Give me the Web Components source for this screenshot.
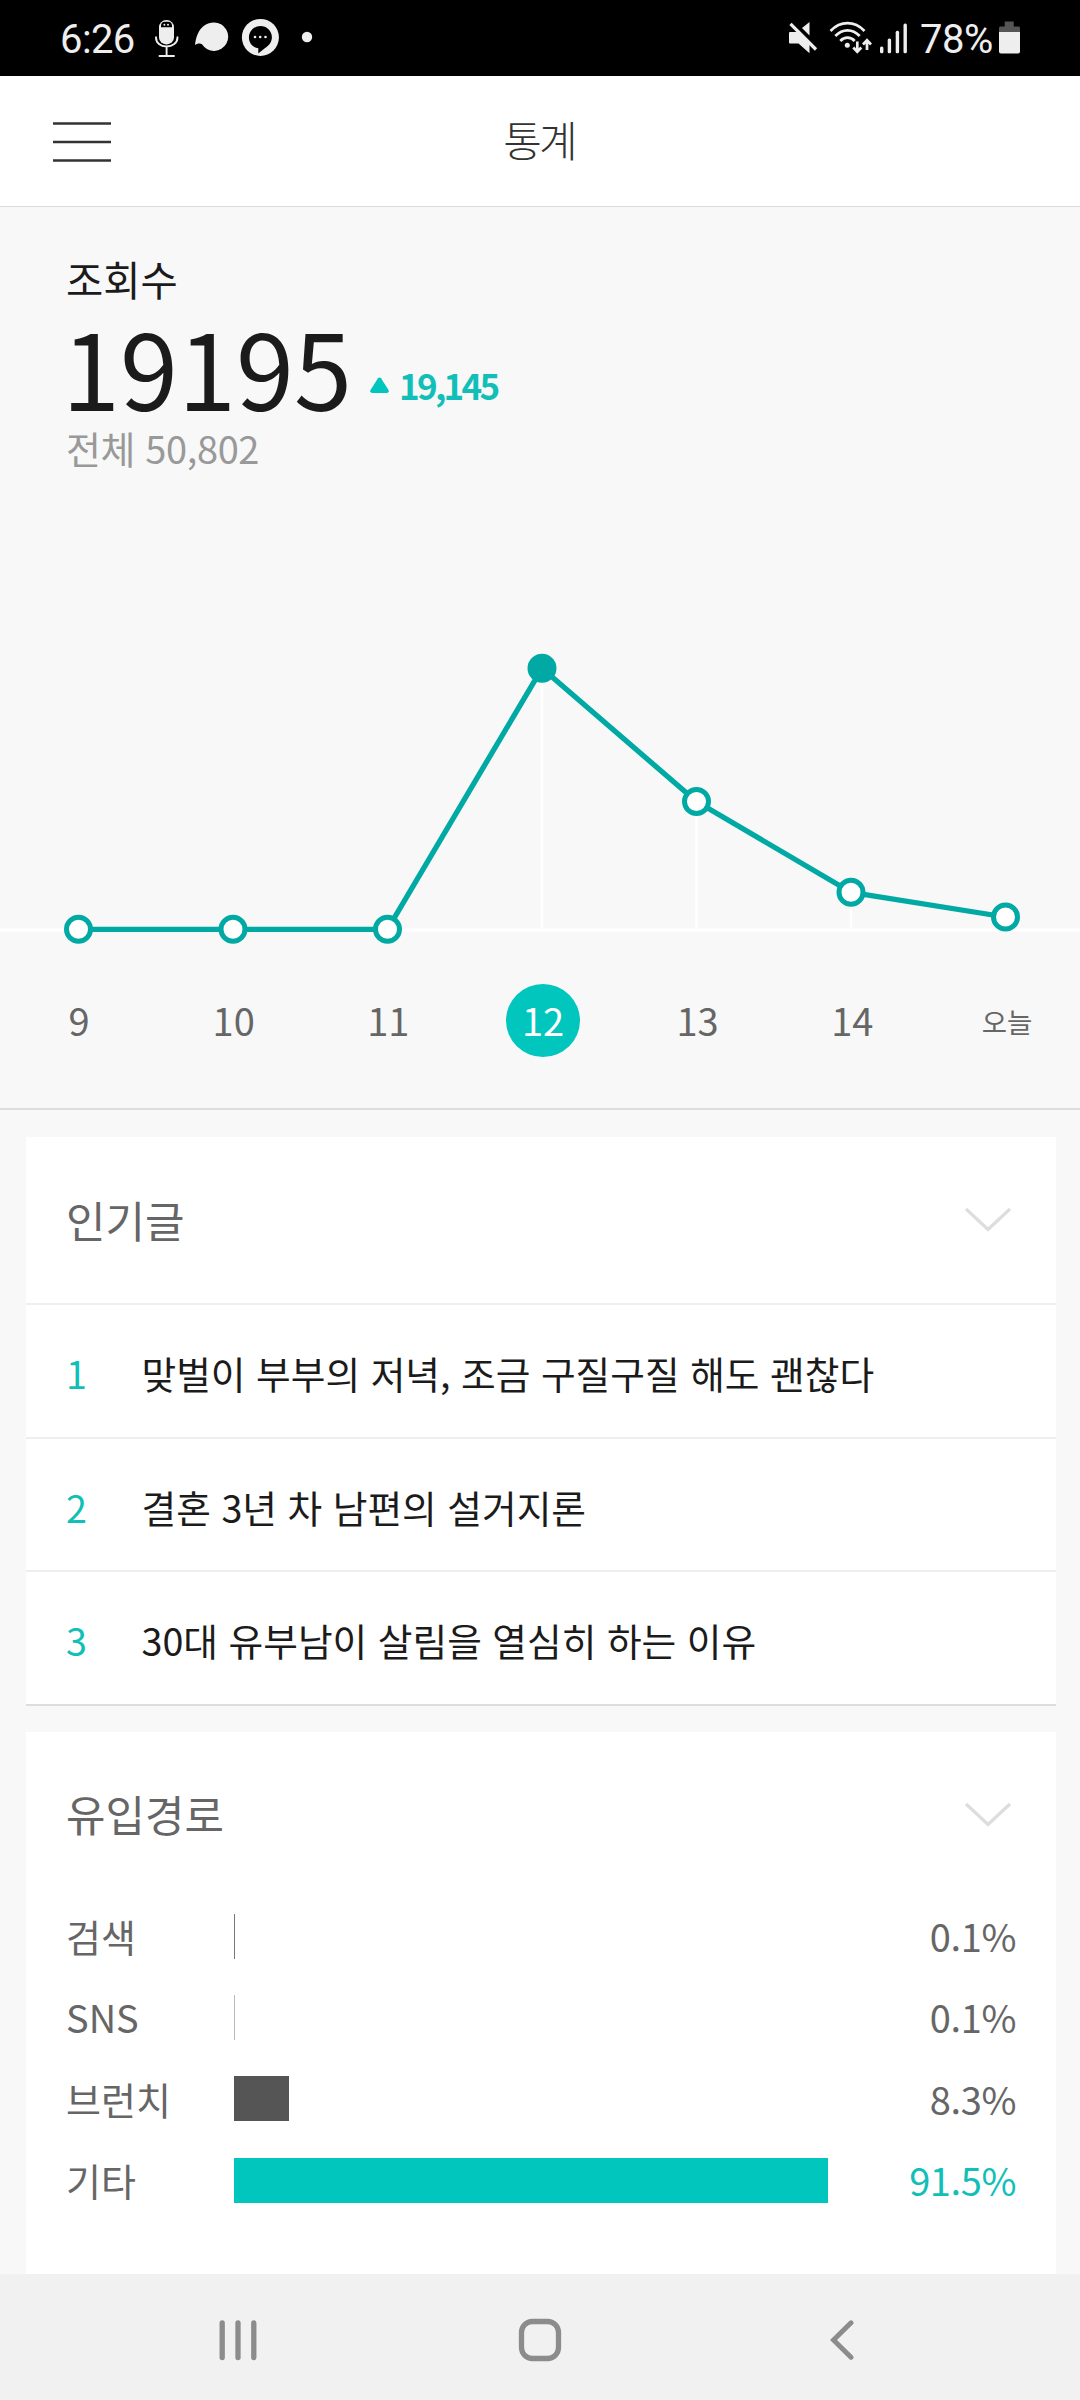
<!DOCTYPE html>
<html lang="ko">
<head>
<meta charset="utf-8">
<title>통계</title>
<style>
body{
  margin: 0;
  width: 1080px;
  height: 2400px;
  overflow: hidden;
  display: flex;
  flex-direction: column;
  background: #f8f8f8;
  color: #1b1b1b;
  font-family: 'Noto Sans CJK KR', sans-serif;
  --mint: #00c6be;
  --mint-text: #12bfb8;
  --gray: #666666;
}
main{
  flex: 1;
  min-height: 0;
  overflow: hidden;
  display: flex;
  flex-direction: column;
}
.cards{
  display: flex;
  flex-direction: column;
  gap: 26px;
  padding: 27px 24px 0 26px;
}
</style>
</head>
<body>
<status-bar time="6:26" battery="78%"></status-bar>
<app-header>통계</app-header>
<main>
  <view-summary count="19195" diff="19,145" total="전체 50,802">조회수</view-summary>
  <trend-chart></trend-chart>
  <day-picker days="9,10,11,12,13,14,오늘" selected="12"></day-picker>
  <div class="cards">
    <stat-card heading="인기글" class="posts">
      <ranked-post rank="1">맞벌이 부부의 저녁, 조금 구질구질 해도 괜찮다</ranked-post>
      <ranked-post rank="2">결혼 3년 차 남편의 설거지론</ranked-post>
      <ranked-post rank="3">30대 유부남이 살림을 열심히 하는 이유</ranked-post>
    </stat-card>
    <stat-card heading="유입경로" class="sources">
      <source-row value="0.1%" width="1" color="#777777">검색</source-row>
      <source-row value="0.1%" width="1" color="#bbbbbb">SNS</source-row>
      <source-row value="8.3%" width="55" color="#555555">브런치</source-row>
      <source-row value="91.5%" width="594" color="#00c6be" top>기타</source-row>
    </stat-card>
  </div>
</main>
<nav-bar></nav-bar>

<script>
class BaseElement extends HTMLElement {
  constructor() {
    super();
    this.attachShadow({ mode: 'open' });
  }
  connectedCallback() {
    this.shadowRoot.innerHTML = this.render();
  }
}

class StatusBar extends BaseElement {
  render() {
    return `
<style>
:host{
  display: flex;
  justify-content: space-between;
  align-items: flex-start;
  height: 76px;
  flex: none;
  box-sizing: border-box;
  padding: 16px 60px 0 60px;
  background: #000;
  color: #eee;
  font: 40px/47px Roboto, sans-serif;
}
.side{
  display: flex;
}
svg{
  display: block;
  height: 44px;
  flex: none;
}
.time{
  width: 90px;
  letter-spacing: -0.6px;
}
.level{
  width: 76px;
  letter-spacing: -0.5px;
}
</style>
<div class="side">
  <span class="time">${this.getAttribute('time')}</span>
  <svg width="170" viewBox="150 16 170 44" fill="#eee">
    <rect x="159" y="20" width="15" height="24.5" rx="7.3"/>
    <path d="M161 27.3v-1.2q0-4.4 4-4.4h3q4 0 4 4.4v1.2z" fill="#000"/>
    <circle cx="164.4" cy="24.8" r="1"/><circle cx="168" cy="24.8" r="1"/>
    <path d="M156 37.2c0 6 4.500 9.300 10.500 9.300s11-3.300 11-9.300M166.600 46.500v9M159.500 56h14.500" fill="none" stroke="#eee" stroke-width="1.9" stroke-linecap="round"/>
    <path d="M195 45c1-9 4-15 8-18.500 3-2.900 7-4 11-4a14.200 14.200 0 1 1-12 21.800c-2-1.200-4-.8-7 .7z"/>
    <circle cx="260.400" cy="37.400" r="18.500"/>
    <path d="M260.400 26a11.500 11.500 0 0 1 11.500 11.300c0 6.700-5.400 9.700-8.700 12.200l-4.900 4.100v-5.300c-5.800-.9-9.400-5.200-9.400-11a11.500 11.500 0 0 1 11.500-11.300z" fill="#000"/>
    <circle cx="255" cy="37" r="1.300"/><circle cx="260.200" cy="37" r="1.300"/><circle cx="265.500" cy="37" r="1.300"/>
    <circle cx="307" cy="37" r="5.200"/>
  </svg>
</div>
<div class="side">
  <svg width="136" viewBox="784 16 136 44" fill="#eee">
    <path d="M790 32h8l11.500 11.500v9.800l-11-9.800h-8.500q-1 0-1-1v-9.500q0-1 1-1z"/>
    <path d="M809.500 22v13.500l-7.500-7.500z"/>
    <path d="M790.500 23.800l25.500 25.700" stroke="#eee" stroke-width="3.200" fill="none"/>
    <g fill="none" stroke="#eee" stroke-width="2.700">
      <path d="M830.500 31q7.500-7.800 17-7.800t17 7.800M835.300 36q5.500-5.700 12.200-5.700t12.200 5.700M840.300 41q3-3.300 7.200-3.300t7.200 3.300"/>
      <path d="M857.300 41.500v10M853.300 47.500l4 4.300 4-4.300M867 50v-10M863 44.500l4-4.300 4 4.300"/>
    </g>
    <circle cx="847.300" cy="45.200" r="2.500"/>
    <rect x="880" y="46.500" width="3.400" height="6.700" rx="1.500"/>
    <rect x="887.700" y="38.500" width="3.400" height="14.700" rx="1.500"/>
    <rect x="895.700" y="30.700" width="3.400" height="22.500" rx="1.500"/>
    <rect x="903.500" y="23.500" width="3.400" height="29.700" rx="1.500"/>
  </svg>
  <span class="level">${this.getAttribute('battery')}</span>
  <svg width="24" viewBox="996 16 24 44">
    <path d="M1004.700 21.500h9v5h5q1.300 0 1.300 1.500v4.500h-21v-4.500q0-1.500 1.300-1.500h4.400z" fill="#555"/>
    <path d="M999 32h21v19.500q0 2-2 2h-17q-2 0-2-2z" fill="#eee"/>
  </svg>
</div>`;
  }
}

class AppHeader extends BaseElement {
  render() {
    return `
<style>
:host{
  display: grid;
  grid-template-columns: 1fr auto 1fr;
  align-items: center;
  height: 131px;
  flex: none;
  box-sizing: border-box;
  padding: 0 55px 0 53px;
  border-bottom: 1px solid #dadada;
  background: #fff;
}
h1{
  margin: 0;
  padding-bottom: 4px;
  font-size: 42px;
  line-height: 60px;
  font-weight: 200;
  letter-spacing: -3px;
  color: #333;
}
</style>
<svg width="58" height="42" fill="#333"><path d="M0 2.200h58v2.600H0zM0 20.700h58v2.600H0zM0 39.200h58v2.600H0z"/></svg>
<h1><slot></slot></h1>`;
  }
}

class ViewSummary extends BaseElement {
  render() {
    return `
<style>
:host{
  display: flex;
  flex-direction: column;
  height: 393px;
  flex: none;
  box-sizing: border-box;
  padding: 42px 66px 0;
}
.label{
  font-size: 40.500px;
  line-height: 60px;
}
.row{
  display: flex;
  align-items: flex-start;
  height: 111px;
}
.count{
  margin-left: -4px;
  font-size: 104.500px;
  line-height: 113px;
}
.diff{
  display: flex;
  align-items: center;
  gap: 10px;
  margin-left: 18px;
  padding-top: 50px;
  font-size: 35px;
  line-height: 52px;
  font-weight: 700;
  letter-spacing: -2.700px;
  color: var(--mint-text);
}
.total{
  font-size: 38px;
  line-height: 55px;
  letter-spacing: -0.400px;
  color: #999;
}
</style>
<div class="label"><slot></slot></div>
<div class="row">
  <span class="count">${this.getAttribute('count')}</span>
  <div class="diff">
    <svg width="19" height="17" viewBox="0 0 19 17"><path d="M8 1.300q1.500-1.600 3 0l7.500 11.700q1 2.500-1.500 3h-15q-2.500-.5-1.500-3z" fill="#00c6be"/></svg>
    <span>${this.getAttribute('diff')}</span>
  </div>
</div>
<div class="total">${this.getAttribute('total')}</div>`;
  }
}

class TrendChart extends BaseElement {
  render() {
    const base = 329.5;
    const points = [[78.5, 329.3], [233, 329.3], [387.5, 329.3], [542, 68.3], [696.500, 201.5], [851, 292.300], [1005.5, 317]];
    const lines = points.filter(p => p[1] < 315)
      .map(p => `<path d="M${p[0]} ${p[1]}V${base}" stroke="#fff" stroke-width="2.5"/>`).join('');
    const dots = points.map((p, i) =>
      `<circle cx="${p[0]}" cy="${p[1]}" r="12" fill="${i === 3 ? '#00a9a3' : '#fff'}" stroke="#00a9a3" stroke-width="5"/>`).join('');
    return `
<style>
:host{
  display: block;
  height: 380px;
  flex: none;
}
svg{
  display: block;
}
</style>
<svg width="1080" height="380" viewBox="0 0 1080 380">
  <path d="M0 ${base + 0.5}H1080" stroke="#fff" stroke-width="3"/>
  ${lines}
  <polyline points="${points.join(' ')}" fill="none" stroke="#00a9a3" stroke-width="5.300" stroke-linejoin="round"/>
  ${dots}
</svg>`;
  }
}

class DayPicker extends BaseElement {
  render() {
    const selected = this.getAttribute('selected');
    const items = this.getAttribute('days').split(',').map(day => {
      const cls = day === selected ? 'on' : isNaN(day) ? 'today' : '';
      return `<span class="${cls}">${day}</span>`;
    }).join('');
    return `
<style>
:host{
  display: flex;
  justify-content: space-between;
  height: 130px;
  flex: none;
  box-sizing: border-box;
  padding: 4px 36px 0 42px;
  border-bottom: 2px solid #ddd;
}
span{
  width: 74px;
  height: 73px;
  line-height: 72px;
  text-align: center;
  font-size: 38px;
  color: var(--gray);
}
.on{
  border-radius: 50%;
  background: var(--mint);
  color: #fff;
}
.today{
  font-size: 27.500px;
  line-height: 74px;
}
</style>
${items}`;
  }
}

class StatCard extends BaseElement {
  render() {
    return `
<style>
:host{
  display: block;
  background: #fff;
}
:host(.posts){
  border-bottom: 2px solid #ddd;
}
:host(.sources){
  padding-bottom: 84px;
}
header{
  display: flex;
  justify-content: space-between;
  align-items: center;
  height: 166px;
  padding: 0 45px 0 40px;
}
:host(.sources) header{
  margin-bottom: -2px;
}
h2{
  margin: 0;
  padding-bottom: 3px;
  font-size: 42.900px;
  line-height: 62px;
  font-weight: 400;
  color: var(--gray);
}
</style>
<header>
  <h2>${this.getAttribute('heading')}</h2>
  <svg width="46" height="26" viewBox="0 0 46 26"><path d="M1 2l22 20.500L45 2" fill="none" stroke="#ddd" stroke-width="3.200"/></svg>
</header>
<slot></slot>`;
  }
}

class RankedPost extends BaseElement {
  render() {
    return `
<style>
:host{
  display: flex;
  align-items: center;
  height: 133.500px;
  box-sizing: border-box;
  padding: 5px 40px 0;
  border-top: 2px solid #eee;
  font-size: 37.700px;
  line-height: 56px;
}
.rank{
  width: 75.500px;
  color: var(--mint-text);
}
</style>
<span class="rank">${this.getAttribute('rank')}</span>
<span><slot></slot></span>`;
  }
}

class SourceRow extends BaseElement {
  render() {
    const top = this.hasAttribute('top');
    return `
<style>
:host{
  display: grid;
  grid-template-columns: 168px 1fr auto;
  align-items: center;
  height: 81.300px;
  padding: 0 40px;
  font-size: 38px;
  line-height: 56px;
  color: var(--gray);
}
.bar{
  width: ${this.getAttribute('width')}px;
  height: 45px;
  background: ${this.getAttribute('color')};
}
.value{
  letter-spacing: -0.400px;
  color: ${top ? 'var(--mint-text)' : 'inherit'};
}
</style>
<span><slot></slot></span>
<div class="bar"></div>
<span class="value">${this.getAttribute('value')}</span>`;
  }
}

class NavBar extends BaseElement {
  render() {
    return `
<style>
:host{
  display: grid;
  grid-template-columns: 1fr 44px 1fr;
  align-items: center;
  height: 126px;
  flex: none;
  box-sizing: border-box;
  padding: 5px 219px 0;
  background: #f1f1f1;
}
.back{
  justify-self: end;
  margin-right: 7px;
}
</style>
<svg width="38" height="42"><path d="M3.200 4v34.500M19 4v34.500M34.800 4v34.500" stroke="#8c8c8c" stroke-width="5.300" stroke-linecap="round"/></svg>
<svg width="44" height="44"><rect x="3.500" y="3.500" width="37" height="37" rx="11" fill="none" stroke="#8c8c8c" stroke-width="5.300"/></svg>
<svg class="back" width="24" height="42"><path d="M21 3.800L3.500 21 21 38.200" fill="none" stroke="#8c8c8c" stroke-width="5" stroke-linecap="round"/></svg>`;
  }
}

customElements.define('status-bar', StatusBar);
customElements.define('app-header', AppHeader);
customElements.define('view-summary', ViewSummary);
customElements.define('trend-chart', TrendChart);
customElements.define('day-picker', DayPicker);
customElements.define('stat-card', StatCard);
customElements.define('ranked-post', RankedPost);
customElements.define('source-row', SourceRow);
customElements.define('nav-bar', NavBar);
</script>
</body>
</html>
